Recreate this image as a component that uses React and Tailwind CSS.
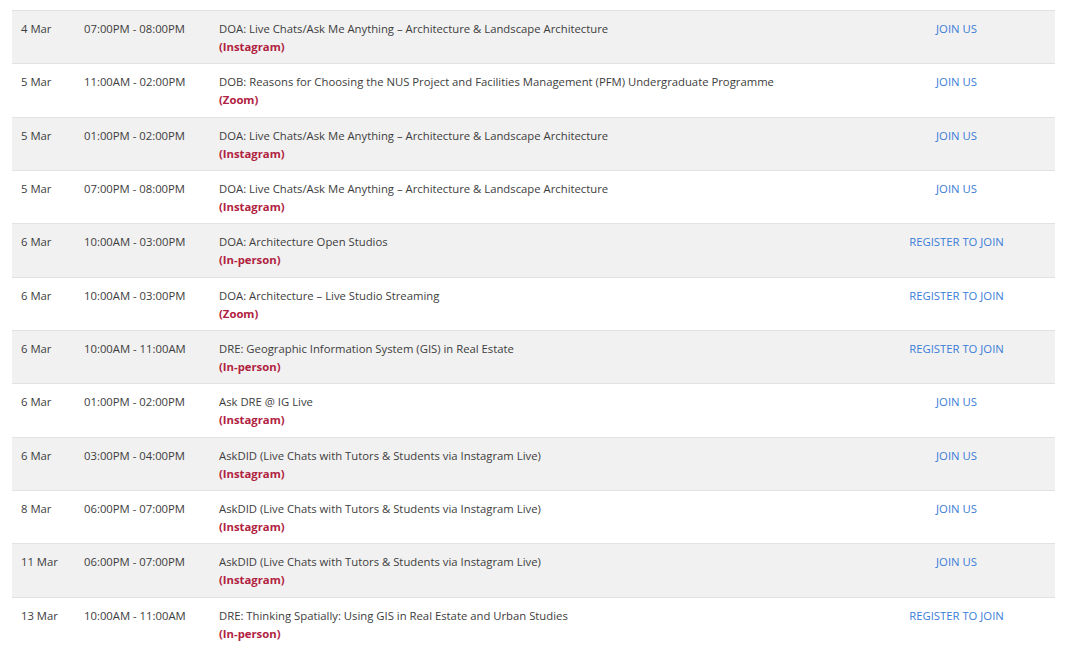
const events = [
  ['4 Mar', '07:00PM - 08:00PM', 'DOA: Live Chats/Ask Me Anything – Architecture & Landscape Architecture', 'Instagram', 'JOIN US'],
  ['5 Mar', '11:00AM - 02:00PM', 'DOB: Reasons for Choosing the NUS Project and Facilities Management (PFM) Undergraduate Programme', 'Zoom', 'JOIN US'],
  ['5 Mar', '01:00PM - 02:00PM', 'DOA: Live Chats/Ask Me Anything – Architecture & Landscape Architecture', 'Instagram', 'JOIN US'],
  ['5 Mar', '07:00PM - 08:00PM', 'DOA: Live Chats/Ask Me Anything – Architecture & Landscape Architecture', 'Instagram', 'JOIN US'],
  ['6 Mar', '10:00AM - 03:00PM', 'DOA: Architecture Open Studios', 'In-person', 'REGISTER TO JOIN'],
  ['6 Mar', '10:00AM - 03:00PM', 'DOA: Architecture – Live Studio Streaming', 'Zoom', 'REGISTER TO JOIN'],
  ['6 Mar', '10:00AM - 11:00AM', 'DRE: Geographic Information System (GIS) in Real Estate', 'In-person', 'REGISTER TO JOIN'],
  ['6 Mar', '01:00PM - 02:00PM', 'Ask DRE @ IG Live', 'Instagram', 'JOIN US'],
  ['6 Mar', '03:00PM - 04:00PM', 'AskDID (Live Chats with Tutors & Students via Instagram Live)', 'Instagram', 'JOIN US'],
  ['8 Mar', '06:00PM - 07:00PM', 'AskDID (Live Chats with Tutors & Students via Instagram Live)', 'Instagram', 'JOIN US'],
  ['11 Mar', '06:00PM - 07:00PM', 'AskDID (Live Chats with Tutors & Students via Instagram Live)', 'Instagram', 'JOIN US'],
  ['13 Mar', '10:00AM - 11:00AM', 'DRE: Thinking Spatially: Using GIS in Real Estate and Urban Studies', 'In-person', 'REGISTER TO JOIN'],
]

export default function App() {
  return (
    <div className="min-h-[648px] bg-white pt-[10px] font-['Open_Sans',sans-serif] text-[11.3px] leading-[18px] text-[#3d3d3d]">
      <div className="ml-[12px] w-[1043px]">
        {events.map(([date, time, title, where, action], i) => (
          <div
            key={i}
            className={`flex h-[53.33px] border-t border-[#e2e2e2] pt-[9px] ${i % 2 === 0 ? 'bg-[#f1f1f1]' : 'bg-white'}`}
          >
            <div className="w-[72px] pl-[9px]">{date}</div>
            <div className="w-[135px]">{time}</div>
            <div className="w-[639px]">
              <div>{title}</div>
              <div className="font-bold text-[#b0223f]">({where})</div>
            </div>
            <div className="flex-1 text-center text-[#3b7dd8]">{action}</div>
          </div>
        ))}
      </div>
    </div>
  )
}
